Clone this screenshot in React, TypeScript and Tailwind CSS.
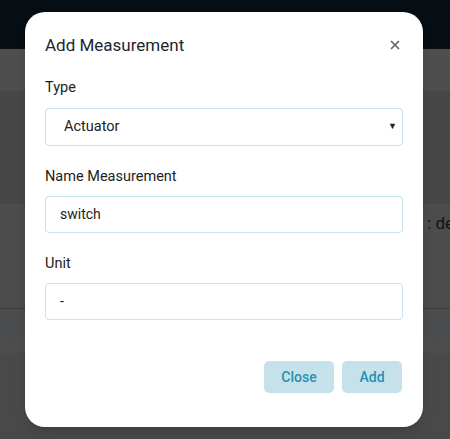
import { X } from "lucide-react"

export default function App() {
  return (
    <div className="relative h-[439px] w-[450px] overflow-hidden bg-[#494949] font-['Roboto',sans-serif]">
      {/* page behind the overlay */}
      <div className="flex h-full flex-col">
        <div className="h-[49px] bg-[#060e13]" />
        <div className="h-[42px] bg-[#4e4e4e]" />
        <div className="h-[113px] bg-[#474747]" />
        <div className="flex h-[104px] items-start justify-end bg-[#4c4c4c] pt-[7px]">
          <span className="-mr-[4px] text-[17px] text-[#111]">e : de</span>
        </div>
        <div className="h-[1px] bg-[#3e3e3e]" />
        <div className="h-[31px] bg-[#4a4c4e]" />
        <div className="h-[13px] bg-[#4d4d4d]" />
        <div className="flex-1 bg-[#494949]" />
      </div>

      {/* modal */}
      <div className="absolute left-[25px] top-[12px] w-[398px] rounded-[20px] bg-white px-[20px] pb-[34px] pt-[20px] shadow-lg">
        <div className="flex items-center justify-between">
          <h2 className="text-[17px] leading-[26px] text-[#1b2730]">Add Measurement</h2>
          <X className="mr-[1px] h-[14px] w-[14px] text-[#5d6a72]" strokeWidth={3} />
        </div>

        <div className="mt-[19px] text-[14.5px] leading-[22px] text-[#222]">Type</div>
        <div className="mt-[9px] flex h-[38px] items-center justify-between rounded-[4px] border border-[#c7e3eb] pl-[18px] pr-[5px]">
          <span className="text-[14.5px] text-[#222]">Actuator</span>
          <span className="text-[9px] text-[#222]">▼</span>
        </div>

        <div className="mt-[20px] text-[14.5px] leading-[22px] text-[#222]">Name Measurement</div>
        <div className="mt-[8px] flex h-[37px] items-center rounded-[4px] border border-[#c7e3eb] pl-[14px]">
          <span className="text-[14px] text-[#222]">switch</span>
        </div>

        <div className="mt-[20px] text-[14.5px] leading-[22px] text-[#222]">Unit</div>
        <div className="mt-[8px] flex h-[37px] items-center rounded-[4px] border border-[#c7e3eb] pl-[14px]">
          <span className="text-[14px] text-[#222]">-</span>
        </div>

        <div className="mr-[1px] mt-[41px] flex justify-end gap-[8px]">
          <button className="h-[32px] w-[70px] rounded-[5px] bg-[#c5e2ea] text-[14px] font-medium text-[#2590b5]">
            Close
          </button>
          <button className="h-[32px] w-[60px] rounded-[5px] bg-[#c5e2ea] text-[14px] font-medium text-[#2590b5]">
            Add
          </button>
        </div>
      </div>
    </div>
  )
}
